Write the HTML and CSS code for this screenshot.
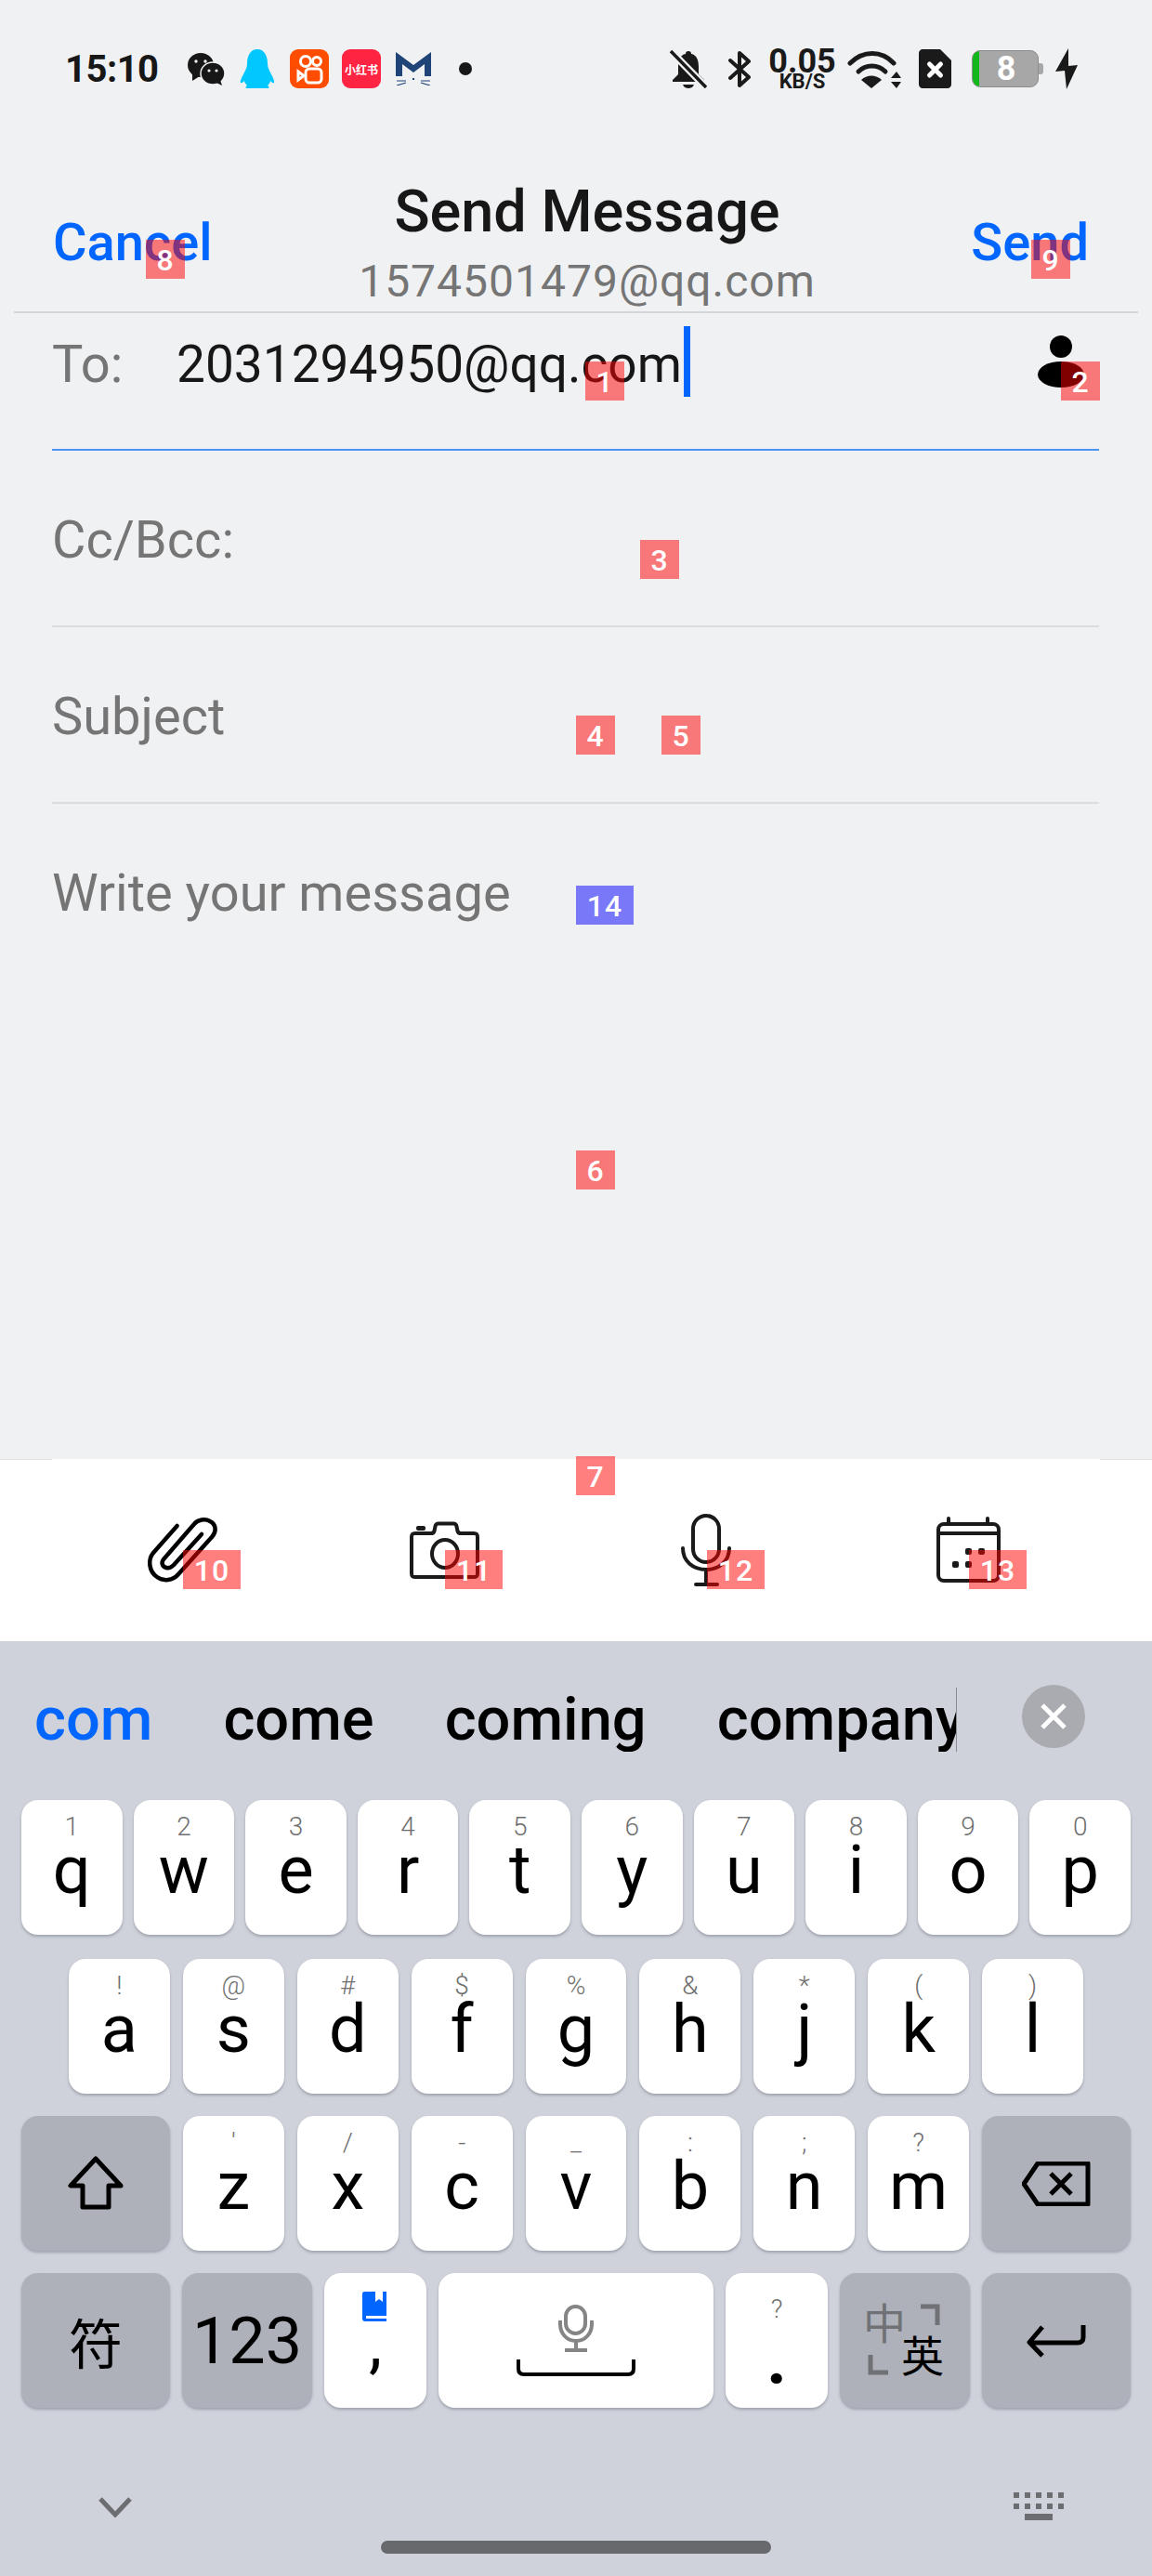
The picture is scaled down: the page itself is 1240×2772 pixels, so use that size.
FILE: index.html
```html
<!DOCTYPE html>
<html lang="en">
<head>
    <meta charset="UTF-8">
    <meta name="viewport" content="width=device-width, initial-scale=1.0">
    <title>Send Message</title>
    <link rel="stylesheet" href="styles.css">
</head>
<body>
<div class="phone">

    <div class="status-bar">
        <span class="clock">15:10</span>
        <svg class="app-icon wechat" viewBox="0 0 40 36" width="40" height="36">
            <ellipse cx="14" cy="14" rx="14" ry="13" fill="#171717"/>
            <path d="M5 23 L5 31 L13 26Z" fill="#171717"/>
            <circle cx="9" cy="10" r="1.7" fill="#f0f1f3"/>
            <circle cx="19" cy="10" r="1.7" fill="#f0f1f3"/>
            <ellipse cx="27" cy="23" rx="13" ry="12" fill="#171717" stroke="#f0f1f3" stroke-width="1.5"/>
            <path d="M31 33 L37 36 L35 30Z" fill="#171717"/>
            <circle cx="23" cy="20" r="1.6" fill="#f0f1f3"/>
            <circle cx="31" cy="20" r="1.6" fill="#f0f1f3"/>
        </svg>
        <svg class="app-icon qq" viewBox="0 0 38 42" width="38" height="42">
            <path fill="#00c8ff" d="M19 0C27 0 30 8 30 15C30 19 31 21 33 25C35 29 38 34 37 36C36 37 34 35 33 34C33 36 31 38 30 39C32 40 32 42 30 42H8C6 42 6 40 8 39C7 38 5 36 5 34C4 35 2 37 1 36C0 34 3 29 5 25C7 21 8 19 8 15C8 8 11 0 19 0Z"/>
        </svg>
        <svg class="app-icon kuaishou" viewBox="0 0 42 42" width="42" height="42">
            <rect width="42" height="42" rx="9" fill="#ff4d00"/>
            <g fill="none" stroke="#fff" stroke-width="3">
                <circle cx="17" cy="13" r="5.5"/>
                <circle cx="29" cy="13" r="4.5"/>
                <rect x="17" y="21" width="17" height="15" rx="4"/>
                <path d="M9 24 L15 28.5 L9 33Z"/>
            </g>
        </svg>
        <div class="app-icon xhs">小红书</div>
        <svg class="app-icon catm" viewBox="0 0 38 36" width="38" height="36">
            <path fill="#1f4478" d="M0 0L19 14L38 0V26H31V13L19 22L7 13V26H0Z"/>
            <rect x="18" y="28" width="2" height="2" fill="#1f4478"/>
            <path d="M1 31H11M1 36L11 33M27 31H37M27 33L37 36" stroke="#1f4478" stroke-width="1.2" fill="none"/>
        </svg>
        <span class="status-dot"></span>

        <div class="status-right">
            <svg class="st-bell" viewBox="0 0 40 41" width="40" height="41">
                <path fill="#1a1a1a" d="M20 1C22 1 23 2 23 4C29 5 31 11 31 18V26L37 32V34H3V32L9 26V18C9 11 11 5 17 4C17 2 18 1 20 1Z"/>
                <path fill="#1a1a1a" d="M14 37H26C25 40 22 41 20 41C18 41 15 40 14 37Z"/>
                <path d="M1 1L39 40" stroke="#f0f1f3" stroke-width="8"/>
                <path d="M1 1L39 40" stroke="#1a1a1a" stroke-width="3.5"/>
            </svg>
            <svg class="st-bt" viewBox="0 0 24 41" width="24" height="41">
                <path d="M2 11L22 29L12 38V3L22 12L2 30" fill="none" stroke="#1a1a1a" stroke-width="4" stroke-linejoin="round" stroke-linecap="round"/>
            </svg>
            <div class="st-net">
                <span class="net-num">0.05</span>
                <span class="net-unit">KB/S</span>
            </div>
            <svg class="st-wifi" viewBox="0 0 58 42" width="58" height="42">
                <g fill="none" stroke="#1a1a1a" stroke-width="5" stroke-linecap="round">
                    <path d="M3 15C17 1 37 1 50 15"/>
                    <path d="M12 24C20 16 33 16 41 24"/>
                </g>
                <path fill="#1a1a1a" d="M26 42L15 33C21 27 31 27 37 33Z"/>
                <path fill="#1a1a1a" d="M47 31L53 24L58 31ZM47 35H58L53 42Z"/>
            </svg>
            <svg class="st-sim" viewBox="0 0 35 42" width="35" height="42">
                <path fill="#1a1a1a" d="M4 0H23L35 12V38C35 40 33 42 31 42H4C2 42 0 40 0 38V4C0 2 2 0 4 0Z"/>
                <path d="M11.5 16L23.5 28M23.5 16L11.5 28" stroke="#fff" stroke-width="5" stroke-linecap="round"/>
            </svg>
            <div class="st-battery">
                <div class="battery-body">
                    <span class="battery-level"></span>
                    <span class="battery-num">8</span>
                </div>
                <span class="battery-tip"></span>
            </div>
            <svg class="st-bolt" viewBox="0 0 25 44" width="25" height="44">
                <path fill="#1a1a1a" d="M14 0L0 25L10 24L12 44L24 18L14 19Z"/>
            </svg>
        </div>
    </div>

    <div class="header">
        <a class="header-btn">Cancel</a>
        <div class="header-title">
            <h1>Send Message</h1>
            <p>1574501479@qq.com</p>
        </div>
        <a class="header-btn send">Send</a>
    </div>
    <div class="header-line"></div>

    <div class="form">
        <div class="field field-to">
            <span class="field-label">To:</span>
            <span class="field-value">2031294950@qq.com</span>
            <span class="caret"></span>
            <svg class="contact-icon" viewBox="0 0 50 56" width="50" height="56">
                <circle cx="25" cy="12" r="12"/>
                <ellipse cx="25" cy="42" rx="25" ry="14"/>
            </svg>
        </div>
        <div class="field">
            <span class="field-label">Cc/Bcc:</span>
        </div>
        <div class="field">
            <span class="field-label">Subject</span>
        </div>
        <div class="field field-body">
            <span class="field-label">Write your message</span>
        </div>
    </div>

    <div class="seam"><span></span><span></span></div>
    <div class="toolbar">
        <svg class="clip-icon" viewBox="0 0 80 80" width="80" height="80">
            <path class="tool-line" d="M35.6 13L10 42C4 49 5 62 14 68C21 73 31 72 37 65L73 25C79 18 77 11 71 8C66 5 58 6 54 11L21 49C18 53 20 57 24 58C27 59 30 57 32 55L62 22"/>
        </svg>
        <svg viewBox="0 0 80 80" width="80" height="80">
            <path class="tool-line" d="M8 21H25C27 21 28 20 28.500 18.500L29.500 13.500C30 11 31 10.500 33 10.500H49C51 10.500 52 11 52.500 13.500L53.500 18.500C54 20 55 21 57 21H71C74 21 75 22 75 25V64C75 67 74 68 71 68H8C5 68 4 67 4 64V25C4 22 5 21 8 21Z"/>
            <ellipse class="tool-line" cx="40" cy="43" rx="14" ry="15"/>
            <rect x="9" y="13" width="10" height="5" rx="2" fill="#1a1a1a"/>
        </svg>
        <svg viewBox="0 0 80 80" width="80" height="80">
            <rect class="tool-line" x="26" y="2" width="28" height="50" rx="14"/>
            <path class="tool-line" d="M15 37C15 51 26 60 40 60C54 60 65 51 65 37M40 60V76M29 76H52"/>
        </svg>
        <svg viewBox="0 0 80 80" width="80" height="80">
            <rect class="tool-line" x="8" y="11" width="65" height="61" rx="6"/>
            <path class="tool-line" d="M8 21H73M19 5V10M61 5V10"/>
            <g fill="#1a1a1a">
                <rect x="37" y="37" width="7" height="7" rx="2"/>
                <rect x="51" y="37" width="7" height="7" rx="2"/>
                <rect x="23" y="51" width="7" height="7" rx="2"/>
                <rect x="37" y="51" width="7" height="7" rx="2"/>
            </g>
        </svg>
    </div>

    <div class="keyboard">
        <div class="candidates">
            <div class="candidate-list">
                <span class="candidate active">com</span>
                <span class="candidate">come</span>
                <span class="candidate">coming</span>
                <span class="candidate">company</span>
            </div>
            <span class="candidate-close">
                <svg viewBox="0 0 28 28" width="28" height="28">
                    <path d="M2 2L26 26M26 2L2 26" stroke="#fff" stroke-width="5"/>
                </svg>
            </span>
        </div>

        <div class="key-row row-1">
            <div class="key"><span class="hint">1</span><span class="letter">q</span></div>
            <div class="key"><span class="hint">2</span><span class="letter">w</span></div>
            <div class="key"><span class="hint">3</span><span class="letter">e</span></div>
            <div class="key"><span class="hint">4</span><span class="letter">r</span></div>
            <div class="key"><span class="hint">5</span><span class="letter">t</span></div>
            <div class="key"><span class="hint">6</span><span class="letter">y</span></div>
            <div class="key"><span class="hint">7</span><span class="letter">u</span></div>
            <div class="key"><span class="hint">8</span><span class="letter">i</span></div>
            <div class="key"><span class="hint">9</span><span class="letter">o</span></div>
            <div class="key"><span class="hint">0</span><span class="letter">p</span></div>
        </div>
        <div class="key-row row-2">
            <div class="key"><span class="hint">!</span><span class="letter">a</span></div>
            <div class="key"><span class="hint">@</span><span class="letter">s</span></div>
            <div class="key"><span class="hint">#</span><span class="letter">d</span></div>
            <div class="key"><span class="hint">$</span><span class="letter">f</span></div>
            <div class="key"><span class="hint">%</span><span class="letter">g</span></div>
            <div class="key"><span class="hint">&amp;</span><span class="letter">h</span></div>
            <div class="key"><span class="hint">*</span><span class="letter">j</span></div>
            <div class="key"><span class="hint">(</span><span class="letter">k</span></div>
            <div class="key"><span class="hint">)</span><span class="letter">l</span></div>
        </div>
        <div class="key-row row-3">
            <div class="key key-fn key-wide">
                <svg viewBox="0 0 64 60" width="64" height="60">
                    <path class="key-line" d="M32 3L5 32H18V55H46V32H59Z"/>
                </svg>
            </div>
            <div class="key"><span class="hint">'</span><span class="letter">z</span></div>
            <div class="key"><span class="hint">/</span><span class="letter">x</span></div>
            <div class="key"><span class="hint">-</span><span class="letter">c</span></div>
            <div class="key"><span class="hint">_</span><span class="letter">v</span></div>
            <div class="key"><span class="hint">:</span><span class="letter">b</span></div>
            <div class="key"><span class="hint">;</span><span class="letter">n</span></div>
            <div class="key"><span class="hint">?</span><span class="letter">m</span></div>
            <div class="key key-fn key-wide">
                <svg viewBox="0 0 74 48" width="74" height="48">
                    <path class="key-line" d="M17 2H71V46H17L2 24Z"/>
                    <path class="key-line" d="M31 13L53 35M53 13L31 35"/>
                </svg>
            </div>
        </div>
        <div class="key-row row-4">
            <div class="key key-fn key-wide key-sym">符</div>
            <div class="key key-fn key-num">123</div>
            <div class="key">
                <svg class="book-icon" viewBox="0 0 26 32" width="26" height="32">
                    <path fill="#0066ff" d="M2 0H26V32H3C1 32 0 31 0 29V2C0 1 1 0 2 0Z"/>
                    <path fill="#fff" d="M14 0H22V11L18 8L14 11ZM4 26H26V29H4Z"/>
                </svg>
                <span class="letter">,</span>
            </div>
            <div class="key key-space">
                <svg viewBox="0 0 40 52" width="40" height="52">
                    <rect x="9" y="2" width="21" height="29" rx="10.500" fill="none" stroke="#858585" stroke-width="4"/>
                    <path d="M3 17V21C3 31 10 39 20 39C30 39 37 31 37 21V17M20 39V48M8 49H32" fill="none" stroke="#858585" stroke-width="4"/>
                </svg>
                <svg class="space-bar" viewBox="0 0 130 18" width="130" height="18">
                    <path d="M3 0V10C3 14 5 16 9 16H121C125 16 127 14 127 10V0" fill="none" stroke="#000" stroke-width="4"/>
                </svg>
            </div>
            <div class="key key-period"><span class="hint">?</span><span class="letter">.</span></div>
            <div class="key key-fn key-num">
                <svg class="lang-icon" viewBox="0 0 140 145" width="140" height="145">
                    <text class="lang-off" x="48" y="71">中</text>
                    <text class="lang-on" x="89" y="106">英</text>
                    <path d="M87 36H105V56M33 88V107H52" fill="none" stroke="#6f7175" stroke-width="5"/>
                </svg>
            </div>
            <div class="key key-fn key-wide">
                <svg viewBox="0 0 64 36" width="64" height="36">
                    <path class="key-line" d="M61 1V14C61 18 59 20 55 20H4M17 3L3 19.500L17 34"/>
                </svg>
            </div>
        </div>

        <div class="nav-row">
            <svg class="nav-down" viewBox="0 0 36 22" width="36" height="22">
                <path d="M2 2L18 19L34 2" fill="none" stroke="#6b6d70" stroke-width="5"/>
            </svg>
            <svg class="nav-kb" viewBox="0 0 54 30" width="54" height="30">
                <path fill="#6b6d70" d="M0 0h6v6H0zM12 0h6v6h-6zM24 0h6v6h-6zM36 0h6v6h-6zM48 0h6v6h-6zM0 12h6v6H0zM12 12h6v6h-6zM24 12h6v6h-6zM36 12h6v6h-6zM48 12h6v6h-6zM12 23h30v7H12z"/>
            </svg>
        </div>
        <div class="home-pill"></div>
    </div>

    <!-- numbered marks lying over the screen -->
    <span class="mark mark-1">1</span>
    <span class="mark mark-2">2</span>
    <span class="mark mark-3">3</span>
    <span class="mark mark-4">4</span>
    <span class="mark mark-5">5</span>
    <span class="mark mark-6">6</span>
    <span class="mark mark-7">7</span>
    <span class="mark mark-8">8</span>
    <span class="mark mark-9">9</span>
    <span class="mark mark-wide mark-10">10</span>
    <span class="mark mark-wide mark-11">11</span>
    <span class="mark mark-wide mark-12">12</span>
    <span class="mark mark-wide mark-13">13</span>
    <span class="mark mark-wide mark-blue mark-14">14</span>

</div>
</body>
</html>
```

FILE: styles.css
```css
body {
    margin: 0;
    font-family: Roboto, "Noto Sans CJK SC", sans-serif;
    background-color: #f0f1f3;
}

.phone {
    position: relative;
    width: 1240px;
    height: 2772px;
    display: flex;
    flex-direction: column;
    overflow: hidden;
}

/* status bar */
.status-bar {
    height: 148px;
    display: flex;
    align-items: center;
    padding: 0 79px 0 70px;
    box-sizing: border-box;
    flex-shrink: 0;
}

.clock {
    width: 132px;
    font-size: 40px;
    font-weight: 700;
    letter-spacing: -0.5px;
    color: #171717;
}

.app-icon {
    flex-shrink: 0;
    margin-right: 16px;
}

.xhs {
    width: 42px;
    height: 42px;
    border-radius: 9px;
    background-color: #ff2442;
    color: #fff;
    font-size: 12px;
    font-weight: 700;
    display: flex;
    align-items: center;
    justify-content: center;
    font-family: "Noto Sans CJK SC", sans-serif;
}

.kuaishou {
    margin-right: 14px;
}

.status-dot {
    width: 14px;
    height: 14px;
    border-radius: 50%;
    background-color: #171717;
    margin-left: 14px;
}

.status-right {
    margin-left: auto;
    display: flex;
    align-items: center;
}

.st-bt { margin-left: 23px; }
.st-net { margin-left: 21px; }
.st-wifi { margin-left: 14px; }
.st-sim { margin-left: 19px; }
.st-battery { margin-left: 22px; }
.st-bolt { margin-left: 13px; }

.st-net {
    width: 69px;
    display: flex;
    flex-direction: column;
    align-items: center;
    font-weight: 700;
    color: #1a1a1a;
}

.net-num {
    font-size: 36px;
    line-height: 27px;
}

.net-unit {
    font-size: 22px;
    line-height: 16px;
}

.st-battery {
    display: flex;
    align-items: center;
}

.battery-body {
    width: 72px;
    height: 40px;
    box-sizing: border-box;
    display: flex;
    background-color: #a7a7a7;
    border: 1px solid #8d8d8d;
    border-radius: 9px;
    overflow: hidden;
}

.battery-level {
    width: 7px;
    background-color: #10b81c;
}

.battery-num {
    flex: 1;
    padding-right: 5px;
    text-align: center;
    color: #fff;
    font-size: 36px;
    font-weight: 700;
    line-height: 38px;
}

.battery-tip {
    width: 5px;
    height: 12px;
    background-color: #a7a7a7;
    border-radius: 0 3px 3px 0;
}

/* header */
.header {
    display: grid;
    grid-template-columns: 170px 1fr 135px;
    padding: 45px 68px 0 57px;
    height: 187px;
    box-sizing: border-box;
    flex-shrink: 0;
}

.header-btn {
    margin-top: 35px;
    font-size: 56px;
    font-weight: 500;
    line-height: 66px;
    color: #0066ff;
}

.send {
    justify-self: end;
}

.header-title {
    text-align: center;
}

.header-title h1 {
    margin: 0;
    font-size: 63px;
    font-weight: 500;
    line-height: 70px;
    color: #171717;
}

.header-title p {
    margin: 12px 0 0;
    font-size: 48px;
    line-height: 56px;
    letter-spacing: 1px;
    color: #757575;
}

.header-line {
    height: 2px;
    margin: 0 15px;
    background-color: #d4d5d8;
    flex-shrink: 0;
}

/* form */
.form {
    flex: 1;
    display: flex;
    flex-direction: column;
}

.field {
    display: flex;
    align-items: flex-start;
    height: 190px;
    box-sizing: border-box;
    margin: 0 57px 0 56px;
    padding-top: 64px;
    border-bottom: 2px solid #dbdcdf;
    font-size: 56px;
    line-height: 64px;
}

.field-to {
    height: 148px;
    padding-top: 23px;
    border-bottom-color: #4b93f0;
}

.field-body {
    flex: 1;
    border-bottom: 0;
}

.field-label {
    color: #757575;
}

.field-to .field-label {
    width: 134px;
}

.field-to .field-value {
    font-size: 55px;
    color: #171717;
}

.caret {
    width: 7px;
    height: 76px;
    margin: -9px 0 0 2px;
    background-color: #0066ff;
}

.contact-icon {
    margin: 1px 16px 0 auto;
}

/* toolbar */
.seam {
    height: 1px;
    display: flex;
    justify-content: space-between;
    background-color: #fff;
    flex-shrink: 0;
}

.seam span {
    width: 56px;
    background-color: #e2e3e6;
}

.toolbar {
    height: 195px;
    display: grid;
    grid-template-columns: repeat(4, 1fr);
    padding: 0 57px 0 56px;
    justify-items: center;
    align-items: center;
    background-color: #fff;
    flex-shrink: 0;
}

.clip-icon {
    margin-left: -3px;
}

.clip-icon .tool-line {
    stroke: #000;
    stroke-width: 4.5;
}

.tool-line {
    fill: none;
    stroke: #1a1a1a;
    stroke-width: 4;
    stroke-linecap: round;
    stroke-linejoin: round;
}

/* keyboard */
.keyboard {
    height: 1006px;
    background-color: #cfd2da;
    flex-shrink: 0;
    box-sizing: border-box;
}

.candidates {
    height: 171px;
    display: flex;
    align-items: flex-start;
    padding-top: 50px;
    box-sizing: border-box;
}

.candidate-list {
    width: 992px;
    height: 69px;
    margin-left: 37px;
    display: flex;
    gap: 76px;
    overflow: hidden;
    border-right: 1px solid #8a8c92;
}

.candidate {
    font-size: 65px;
    font-weight: 500;
    line-height: 69px;
    color: #000;
    flex-shrink: 0;
}

.candidate.active {
    color: #0066ff;
}

.candidate-close {
    width: 68px;
    height: 68px;
    margin: -3px 0 0 70px;
    border-radius: 50%;
    background-color: #a9abb0;
    display: flex;
    align-items: center;
    justify-content: center;
}

.key-row {
    display: flex;
    height: 145px;
    margin-bottom: 24px;
}

.row-1 {
    gap: 12px;
    padding: 0 23px;
    margin-bottom: 26px;
}

.row-2 {
    gap: 14px;
    padding: 0 74px;
}

.row-3, .row-4 {
    gap: 14px;
    padding: 0 23px;
}

.row-4 {
    gap: 13px;
}

.key {
    flex: 1;
    min-width: 0;
    display: flex;
    flex-direction: column;
    align-items: center;
    padding-top: 14px;
    box-sizing: border-box;
    background-color: #fff;
    border-radius: 18px;
    box-shadow: 0 2px 3px rgba(70, 74, 90, 0.35);
}

.hint {
    height: 30px;
    font-size: 28px;
    font-weight: 300;
    line-height: 30px;
    color: #6f6f6f;
}

.letter {
    font-size: 72px;
    line-height: 64px;
    color: #000;
}

.key-fn {
    padding-top: 0;
    justify-content: center;
    background-color: #aeb1ba;
    color: #000;
}

.key-wide {
    flex: 0 0 160px;
}

.row-4 .key {
    flex: 0 0 110px;
}

.row-4 .key-wide {
    flex: 0 0 160px;
}

.row-4 .key-num {
    flex: 0 0 140px;
}

.key-line {
    fill: none;
    stroke: #000;
    stroke-width: 5;
    stroke-linejoin: round;
}

.key-sym {
    font-family: "Noto Sans CJK SC", sans-serif;
    font-size: 58px;
}

.key-num {
    font-size: 70px;
    overflow: hidden;
}

.book-icon {
    margin: 6px 0 -8px -2px;
}

.row-4 .key-space {
    flex: 0 0 296px;
    padding-top: 34px;
    gap: 7px;
}

.key-period .hint {
    margin-top: 10px;
}

.key-period .letter {
    margin-top: 6px;
    font-weight: 700;
    font-size: 76px;
}

.lang-off, .lang-on {
    font-family: "Noto Sans CJK SC", sans-serif;
    font-size: 46px;
    text-anchor: middle;
}

.lang-off {
    fill: #6f7175;
}

.nav-row {
    display: flex;
    justify-content: space-between;
    align-items: flex-start;
    padding: 0 95px 0 106px;
    height: 47px;
    margin-top: 91px;
}

.nav-down {
    margin-top: 5px;
}

.home-pill {
    width: 420px;
    height: 14px;
    margin: 5px auto 0;
    border-radius: 7px;
    background-color: #68696d;
}

/* numbered marks */
.mark {
    position: absolute;
    width: 42px;
    height: 42px;
    background-color: rgba(255, 0, 0, 0.5);
    color: #fff;
    font-size: 32px;
    font-weight: 500;
    line-height: 44px;
    letter-spacing: 1px;
    text-align: center;
}

.mark-wide {
    width: 62px;
}

.mark-blue {
    background-color: rgba(0, 0, 255, 0.5);
}

.mark-1 { left: 630px; top: 389px; }
.mark-2 { left: 1142px; top: 389px; }
.mark-3 { left: 689px; top: 581px; }
.mark-4 { left: 620px; top: 770px; }
.mark-5 { left: 712px; top: 770px; }
.mark-6 { left: 620px; top: 1238px; }
.mark-7 { left: 620px; top: 1567px; }
.mark-8 { left: 157px; top: 258px; }
.mark-9 { left: 1110px; top: 258px; }
.mark-10 { left: 197px; top: 1668px; }
.mark-11 { left: 479px; top: 1668px; }
.mark-12 { left: 761px; top: 1668px; }
.mark-13 { left: 1043px; top: 1668px; }
.mark-14 { left: 620px; top: 953px; }
```
